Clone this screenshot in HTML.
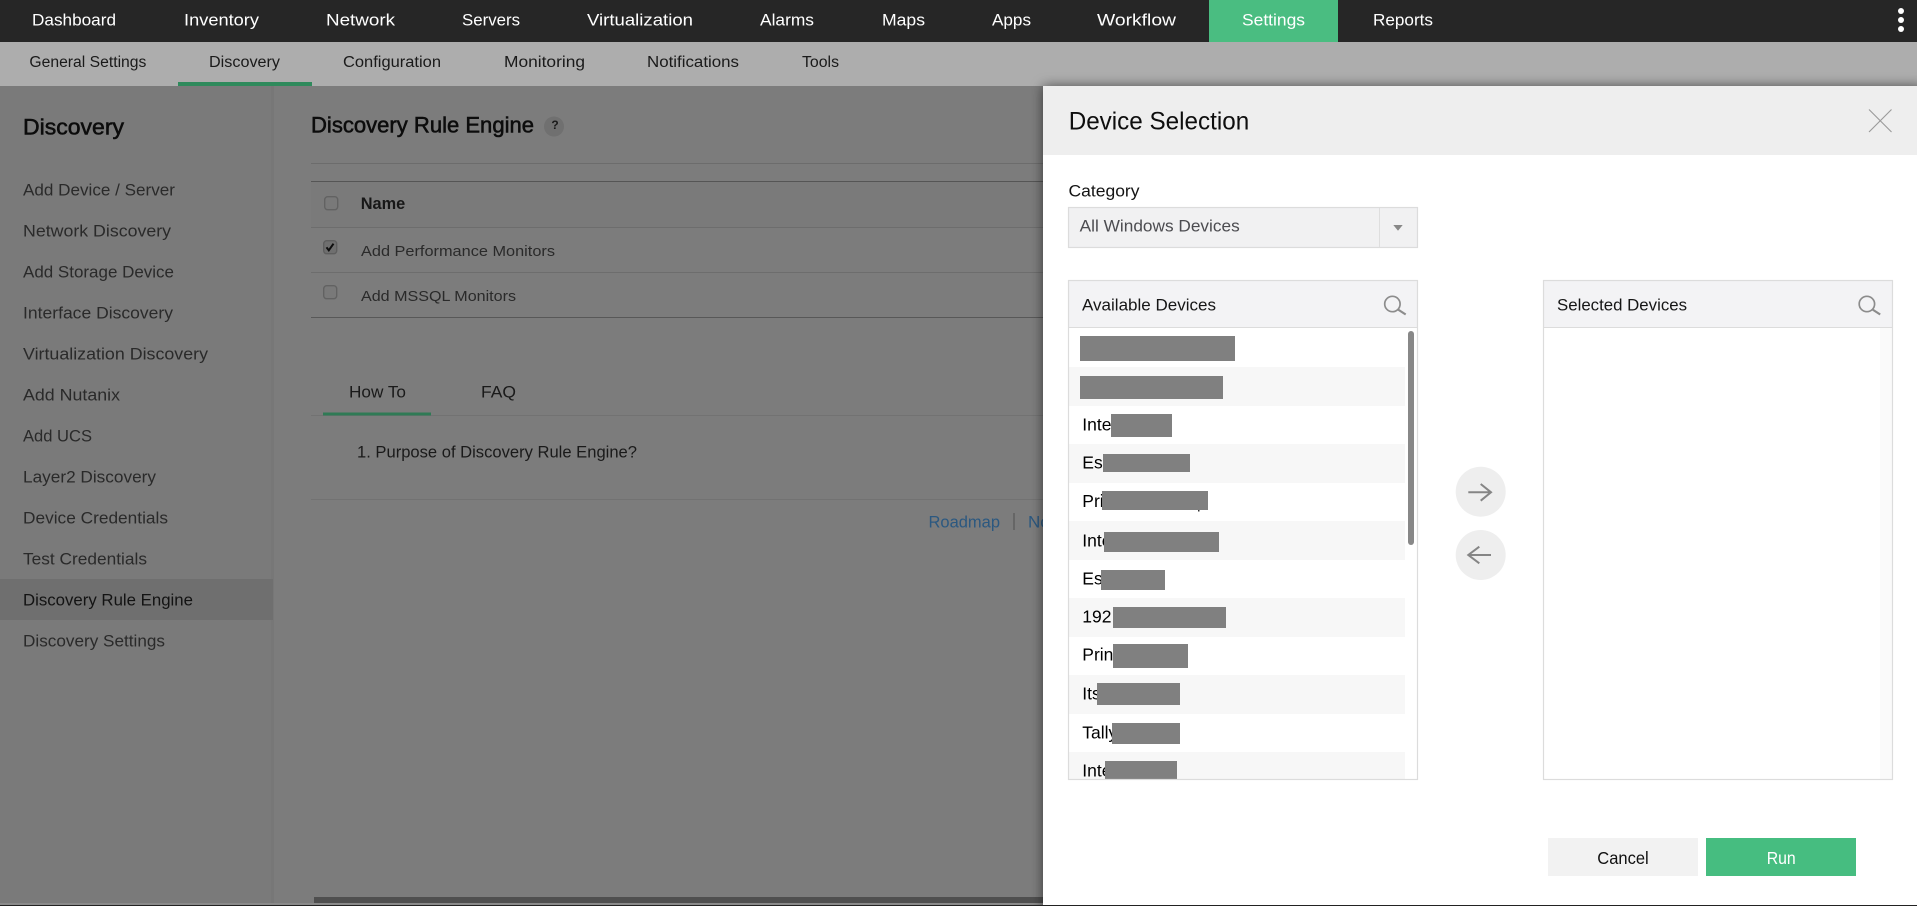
<!DOCTYPE html>
<html lang="en">
<head>
<meta charset="utf-8">
<title>Discovery Rule Engine - Device Selection</title>
<style>
html,body{margin:0;padding:0;width:1917px;height:906px;overflow:hidden;background:#7c7c7c}
svg{display:block}
text{font-family:"Liberation Sans",Arial,sans-serif;white-space:pre}
.nav{font-size:17px;fill:#fff}
.sub{font-size:15.5px;fill:#1a1a1a}
.side{font-size:16.5px;fill:#2a2a2a}
.row{font-size:15px;fill:#2a2a2a}
.dev{font-size:17.5px;fill:#000}
</style>
</head>
<body>
<svg width="1917" height="906" viewBox="0 0 1917 906" xmlns="http://www.w3.org/2000/svg">
<defs>
<filter id="sh" x="-5%" y="-5%" width="110%" height="110%"><feGaussianBlur stdDeviation="6"/></filter>
<filter id="cb" x="-30%" y="-30%" width="160%" height="160%"><feGaussianBlur stdDeviation="0.7"/></filter>
<clipPath id="listclip"><rect x="1069" y="328" width="348" height="451"/></clipPath>
</defs>
<!-- page background -->
<rect x="0" y="0" width="1917" height="906" fill="#7c7c7c"/>
<rect x="0" y="86" width="271" height="820" fill="#7a7a7a"/>
<rect x="271" y="86" width="3" height="820" fill="#777"/>
<rect x="0" y="579" width="273" height="41" fill="#6f6f6f"/>
<!-- top nav -->
<rect x="0" y="0" width="1917" height="42" fill="#262626"/>
<rect x="1209" y="0" width="129" height="42" fill="#4abd81"/>
<text class="nav" x="32" y="25.5" textLength="84" lengthAdjust="spacingAndGlyphs">Dashboard</text>
<text class="nav" x="184" y="25.5" textLength="75" lengthAdjust="spacingAndGlyphs">Inventory</text>
<text class="nav" x="326" y="25.5" textLength="69" lengthAdjust="spacingAndGlyphs">Network</text>
<text class="nav" x="462" y="25.5" textLength="58" lengthAdjust="spacingAndGlyphs">Servers</text>
<text class="nav" x="587" y="25.5" textLength="106" lengthAdjust="spacingAndGlyphs">Virtualization</text>
<text class="nav" x="760" y="25.5" textLength="54" lengthAdjust="spacingAndGlyphs">Alarms</text>
<text class="nav" x="882" y="25.5" textLength="43" lengthAdjust="spacingAndGlyphs">Maps</text>
<text class="nav" x="992" y="25.5" textLength="39" lengthAdjust="spacingAndGlyphs">Apps</text>
<text class="nav" x="1097" y="25.5" textLength="79" lengthAdjust="spacingAndGlyphs">Workflow</text>
<text class="nav" x="1242" y="25.5" textLength="63" lengthAdjust="spacingAndGlyphs">Settings</text>
<text class="nav" x="1373" y="25.5" textLength="60" lengthAdjust="spacingAndGlyphs">Reports</text>
<circle cx="1901" cy="11" r="3" fill="#fff"/>
<circle cx="1901" cy="20" r="3" fill="#fff"/>
<circle cx="1901" cy="29" r="3" fill="#fff"/>
<!-- sub nav -->
<rect x="0" y="42" width="1917" height="44" fill="#adadad"/>
<rect x="178" y="82" width="134" height="4" fill="#2f8a5c"/>
<text class="sub" x="29.4" y="67" textLength="117" lengthAdjust="spacingAndGlyphs">General Settings</text>
<text class="sub" x="209" y="67" textLength="71" lengthAdjust="spacingAndGlyphs">Discovery</text>
<text class="sub" x="343" y="67" textLength="98" lengthAdjust="spacingAndGlyphs">Configuration</text>
<text class="sub" x="504" y="67" textLength="81" lengthAdjust="spacingAndGlyphs">Monitoring</text>
<text class="sub" x="647" y="67" textLength="92" lengthAdjust="spacingAndGlyphs">Notifications</text>
<text class="sub" x="802" y="67" textLength="37" lengthAdjust="spacingAndGlyphs">Tools</text>
<!-- sidebar -->
<text x="23" y="134.5" font-size="22" fill="#0c0c0c" stroke="#0c0c0c" stroke-width="0.55" textLength="101" lengthAdjust="spacingAndGlyphs">Discovery</text>
<text class="side" x="23" y="195.5" textLength="152" lengthAdjust="spacingAndGlyphs">Add Device / Server</text>
<text class="side" x="23" y="236.5" textLength="148" lengthAdjust="spacingAndGlyphs">Network Discovery</text>
<text class="side" x="23" y="277.5" textLength="151" lengthAdjust="spacingAndGlyphs">Add Storage Device</text>
<text class="side" x="23" y="318.5" textLength="150" lengthAdjust="spacingAndGlyphs">Interface Discovery</text>
<text class="side" x="23" y="359.5" textLength="185" lengthAdjust="spacingAndGlyphs">Virtualization Discovery</text>
<text class="side" x="23" y="400.5" textLength="97" lengthAdjust="spacingAndGlyphs">Add Nutanix</text>
<text class="side" x="23" y="441.5" textLength="69" lengthAdjust="spacingAndGlyphs">Add UCS</text>
<text class="side" x="23" y="482.5" textLength="133" lengthAdjust="spacingAndGlyphs">Layer2 Discovery</text>
<text class="side" x="23" y="523.5" textLength="145" lengthAdjust="spacingAndGlyphs">Device Credentials</text>
<text class="side" x="23" y="564.5" textLength="124" lengthAdjust="spacingAndGlyphs">Test Credentials</text>
<text class="side" x="23" y="605.5" style="fill:#131313" textLength="170" lengthAdjust="spacingAndGlyphs">Discovery Rule Engine</text>
<text class="side" x="23" y="646.5" textLength="142" lengthAdjust="spacingAndGlyphs">Discovery Settings</text>
<!-- main content -->
<text x="311" y="132.5" font-size="22" fill="#0c0c0c" stroke="#0c0c0c" stroke-width="0.55" textLength="223" lengthAdjust="spacingAndGlyphs">Discovery Rule Engine</text>
<circle cx="554" cy="126.5" r="10" fill="#707070"/>
<text x="555" y="129" font-size="12" font-weight="bold" fill="#1a1a1a" text-anchor="middle">?</text>
<rect x="311" y="163" width="740" height="1" fill="#6c6c6c"/>
<rect x="311" y="182" width="740" height="45" fill="#7a7a7a"/>
<rect x="311" y="181" width="740" height="1" fill="#555"/>
<rect x="311" y="227" width="740" height="1" fill="#6d6d6d"/>
<rect x="311" y="272" width="740" height="1" fill="#6d6d6d"/>
<rect x="311" y="317" width="740" height="1" fill="#585858"/>
<rect x="324.7" y="196.7" width="13" height="13" rx="3" fill="#797979" stroke="#626262" stroke-width="1.4"/>
<rect x="323.7" y="240.7" width="13" height="13" rx="3" fill="#6f6f6f" stroke="#5e5e5e" stroke-width="1.4"/>
<path d="M326.5 247.3l2.3 3 4.7-6.6" fill="none" stroke="#0e0e0e" stroke-width="2"/>
<rect x="323.7" y="285.7" width="13" height="13" rx="3" fill="#797979" stroke="#626262" stroke-width="1.4"/>
<text x="360.7" y="209" font-size="16.5" font-weight="bold" fill="#171717" textLength="44.5" lengthAdjust="spacingAndGlyphs">Name</text>
<text class="row" x="361" y="256" textLength="194" lengthAdjust="spacingAndGlyphs">Add Performance Monitors</text>
<text class="row" x="361" y="301" textLength="155" lengthAdjust="spacingAndGlyphs">Add MSSQL Monitors</text>
<text x="349" y="397.5" font-size="17" fill="#1a1a1a" textLength="57" lengthAdjust="spacingAndGlyphs">How To</text>
<text x="481" y="397.5" font-size="17" fill="#1a1a1a" textLength="35" lengthAdjust="spacingAndGlyphs">FAQ</text>
<rect x="311" y="415" width="740" height="1" fill="#727272"/>
<rect x="323" y="412.5" width="108" height="3" fill="#2f7a55"/>
<text x="357" y="457.5" font-size="16.5" fill="#1a1a1a" textLength="280" lengthAdjust="spacingAndGlyphs">1. Purpose of Discovery Rule Engine?</text>
<rect x="311" y="499" width="740" height="1" fill="#727272"/>
<text x="928.5" y="527.5" font-size="17" fill="#2b5880" textLength="71.5" lengthAdjust="spacingAndGlyphs">Roadmap</text>
<rect x="1013" y="513" width="2" height="17" fill="#666"/>
<text x="1028" y="527.5" font-size="17" fill="#2b5880">Notifications</text>
<!-- bottom scrollbar -->
<rect x="0" y="903" width="1917" height="2" fill="#8a8a8a"/>
<rect x="314" y="897" width="740" height="6" fill="#4f4f4f"/>
<!-- modal shadow and modal -->
<rect x="1043" y="86" width="880" height="830" fill="#000" fill-opacity="0.55" filter="url(#sh)"/>
<rect x="1043" y="86" width="874" height="820" fill="#fff"/>
<rect x="1043" y="86" width="874" height="69" fill="#eeeeee"/>
<text x="1068.7" y="129.7" font-size="25" fill="#0e0e0e" textLength="180.5" lengthAdjust="spacingAndGlyphs">Device Selection</text>
<path d="M1869 109.5L1891.5 132M1891.5 109.5L1869 132" stroke="#9a9a9a" stroke-width="1.1" fill="none"/>
<text x="1068.5" y="196.7" font-size="17" fill="#141414" textLength="71" lengthAdjust="spacingAndGlyphs">Category</text>
<!-- select -->
<rect x="1068.5" y="207.5" width="349" height="40" fill="#f1f1f2" stroke="#dcdcdc" stroke-width="1.2"/>
<rect x="1379" y="208" width="1" height="39" fill="#dedede"/>
<text x="1079.7" y="231.5" font-size="16.5" fill="#4c4c50" textLength="160" lengthAdjust="spacingAndGlyphs">All Windows Devices</text>
<path d="M1393.3 225h9.4l-4.7 5.7z" fill="#888"/>
<!-- available box -->
<rect x="1068.5" y="280.5" width="349" height="47" fill="#f3f3f5"/>
<rect x="1069" y="328" width="336" height="39" fill="#fff"/>
<g fill="#f7f7f7">
<rect x="1069" y="367" width="336" height="39"/>
<rect x="1069" y="444" width="336" height="39"/>
<rect x="1069" y="521" width="336" height="39"/>
<rect x="1069" y="598" width="336" height="39"/>
<rect x="1069" y="675" width="336" height="39"/>
<rect x="1069" y="752" width="336" height="27"/>
</g>
<rect x="1408" y="331" width="6" height="214" rx="3" fill="#888"/>
<g clip-path="url(#listclip)">
<text class="dev" x="1082.3" y="430.7">Intel</text>
<text class="dev" x="1082.3" y="468.7">Esx</text>
<text class="dev" x="1082.3" y="507">Print</text>
<text class="dev" x="1082.3" y="546.7">Intel</text>
<text class="dev" x="1082.3" y="584.7">Esx</text>
<text class="dev" x="1082.3" y="622.7">192.1</text>
<text class="dev" x="1082.3" y="660.7">Print</text>
<text class="dev" x="1082.3" y="699.7">Itsm</text>
<text class="dev" x="1082.3" y="738.7">Tally</text>
<text class="dev" x="1082.3" y="776.7">Intel</text>
<g fill="#808080">
<rect x="1080" y="336" width="155" height="25"/>
<rect x="1080" y="376" width="143" height="23"/>
<rect x="1111" y="414" width="61" height="23"/>
<rect x="1103" y="454" width="87" height="18"/>
<rect x="1102" y="491" width="106" height="19"/>
<rect x="1104" y="532" width="115" height="20"/>
<rect x="1101" y="570" width="64" height="20"/>
<rect x="1113" y="607" width="113" height="21"/>
<rect x="1113" y="644" width="75" height="24"/>
<rect x="1097" y="683" width="83" height="22"/>
<rect x="1112" y="723" width="68" height="21"/>
<rect x="1105" y="761" width="72" height="18"/>
</g>
<rect x="1198" y="510" width="1.5" height="1.5" fill="#333"/>
</g>
<rect x="1068.5" y="280.5" width="349" height="499" fill="none" stroke="#dcdcdc" stroke-width="1.2"/>
<rect x="1069" y="327" width="348" height="1" fill="#dcdcdc"/>
<text x="1082" y="310.5" font-size="16.5" fill="#161616" textLength="134" lengthAdjust="spacingAndGlyphs">Available Devices</text>
<circle cx="1392.4" cy="304" r="7.7" fill="none" stroke="#8c8c8c" stroke-width="1.7"/>
<path d="M1398 309.5l7.7 5" stroke="#8c8c8c" stroke-width="2.2" fill="none"/>
<!-- arrows -->
<circle cx="1480.7" cy="491.7" r="25" fill="#eeeeee"/>
<path d="M1468.3 492.3H1491M1480.7 484l10.3 8.3-10.3 8.4" fill="none" stroke="#858585" stroke-width="2"/>
<circle cx="1480.7" cy="555" r="25" fill="#eeeeee"/>
<path d="M1491 555H1468.3M1479.3 546.7l-11 8.3 11 8.3" fill="none" stroke="#858585" stroke-width="2"/>
<!-- selected box -->
<rect x="1543.5" y="280.5" width="349" height="47" fill="#f3f3f5"/>
<rect x="1880" y="328" width="12" height="451" fill="#fafafa"/>
<rect x="1543.5" y="280.5" width="349" height="499" fill="none" stroke="#dcdcdc" stroke-width="1.2"/>
<rect x="1544" y="327" width="348" height="1" fill="#dcdcdc"/>
<text x="1557" y="310.5" font-size="16.5" fill="#161616" textLength="130" lengthAdjust="spacingAndGlyphs">Selected Devices</text>
<circle cx="1866.9" cy="304" r="7.7" fill="none" stroke="#8c8c8c" stroke-width="1.7"/>
<path d="M1872.5 309.5l7.7 5" stroke="#8c8c8c" stroke-width="2.2" fill="none"/>
<!-- buttons -->
<rect x="1548" y="838" width="150" height="38" fill="#f2f2f2"/>
<text x="1597.3" y="864" font-size="17.5" fill="#111" textLength="51.4" lengthAdjust="spacingAndGlyphs">Cancel</text>
<rect x="1706" y="838" width="150" height="38" fill="#46bd80"/>
<text x="1766.7" y="864" font-size="17.5" fill="#fff" textLength="29" lengthAdjust="spacingAndGlyphs">Run</text>
<!-- bottom edge -->
<rect x="0" y="905" width="1917" height="1" fill="#222"/>
</svg>
</body>
</html>
